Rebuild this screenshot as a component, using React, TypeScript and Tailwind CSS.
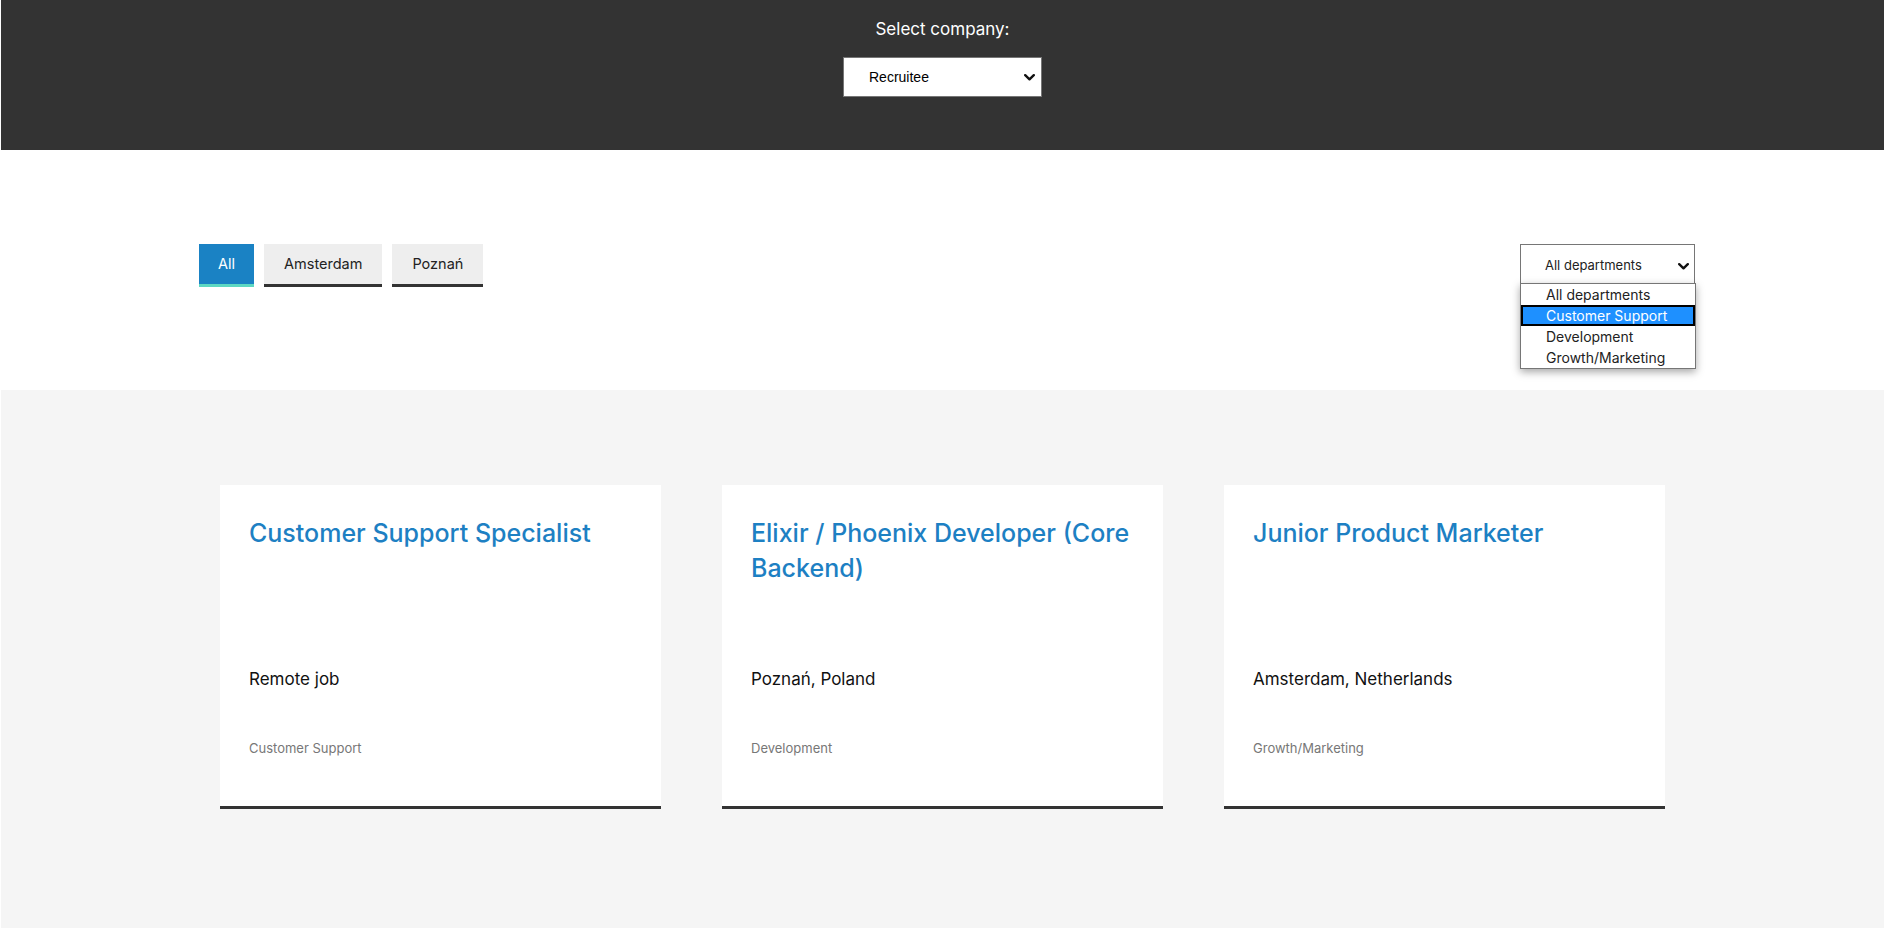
const jobs = [
  { title: 'Customer Support Specialist', location: 'Remote job', dept: 'Customer Support' },
  { title: 'Elixir / Phoenix Developer (Core Backend)', location: 'Poznań, Poland', dept: 'Development' },
  { title: 'Junior Product Marketer', location: 'Amsterdam, Netherlands', dept: 'Growth/Marketing' },
]

const cities = ['All', 'Amsterdam', 'Poznań']
const departments = ['All departments', 'Customer Support', 'Development', 'Growth/Marketing']

function Chevron() {
  return (
    <svg width="11" height="7" viewBox="0 0 11 7" fill="none">
      <path d="M1.2 1.2 5.5 5.3 9.8 1.2" stroke="#111" strokeWidth="2.4" strokeLinecap="round" strokeLinejoin="round" />
    </svg>
  )
}

export default function App() {
  return (
    <div className="min-h-[928px] bg-white px-[1px] pr-[3px] font-['Inter',sans-serif]">
      <header className="h-[150px] bg-[#333333] flex flex-col items-center pt-[16px]">
        <p className="text-white text-[17px] leading-[26px]">Select company:</p>
        <div className="mt-[15px] w-[199px] h-[40px] bg-white border border-[#767676] flex items-center justify-between pl-[25px] pr-[6px]">
          <span className="font-['Liberation_Sans',sans-serif] text-[14px] text-black">Recruitee</span>
          <Chevron />
        </div>
      </header>

      <section className="h-[240px] pt-[94px] px-[198px] flex justify-between items-start">
        <div className="flex gap-[10px]">
          {cities.map((c, i) => (
            <button
              key={c}
              className={
                i === 0
                  ? 'h-[43px] px-[19px] bg-[#1a82c4] text-white text-[14.5px] border-b-[3px] border-[#5dd8c2] pb-[1px]'
                  : 'h-[43px] px-[20px] bg-[#eeeeee] text-[#222] text-[14.5px] border-b-[3px] border-[#333333] pb-[1px]'
              }
            >
              {c}
            </button>
          ))}
        </div>

        <div className="relative mr-[-9px]">
          <div className="w-[175px] h-[40px] bg-white border border-[#767676] flex items-center justify-between pl-[24px] pr-[5px] pt-[4px]">
            <span className="text-[13px] text-[#222]">All departments</span>
            <Chevron />
          </div>
          <ul className="absolute left-0 top-[39px] w-[176px] bg-white border border-[#767676] shadow-[0_3px_8px_rgba(0,0,0,0.35)] z-10">
            {departments.map((d, i) => (
              <li
                key={d}
                className={
                  i === 1
                    ? 'h-[21px] leading-[17px] pl-[23px] text-[14px] text-white bg-[#1e90ff] border-2 border-black'
                    : 'h-[21px] leading-[21px] pl-[25px] text-[14px] text-[#222]'
                }
              >
                {d}
              </li>
            ))}
          </ul>
        </div>
      </section>

      <main className="min-h-[538px] bg-[#f5f5f5] pt-[95px] flex justify-center gap-[61px]">
        {jobs.map((j) => (
          <article key={j.title} className="w-[441px] h-[324px] bg-white border-b-[3px] border-[#333333] px-[29px] pt-[31px]">
            <h2 className="h-[150px] text-[25px] leading-[35px] font-medium text-[#1d80c3]">{j.title}</h2>
            <p className="text-[17px] leading-[27px] text-[#111]">{j.location}</p>
            <p className="mt-[45px] text-[13px] leading-[20px] text-[#777]">{j.dept}</p>
          </article>
        ))}
      </main>
    </div>
  )
}
